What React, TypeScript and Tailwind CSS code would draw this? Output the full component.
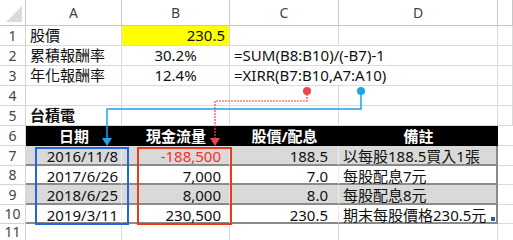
import React from "react";

const cols = ["A", "B", "C", "D", ""];

type Cell = {
  text?: string;
  align?: "left" | "right" | "center";
  cls?: string;
};

const rows: Cell[][] = [
  [{ text: "股價" }, { text: "230.5", align: "right", cls: "bg-[#ffff00] pr-1" }, {}, {}, {}],
  [{ text: "累積報酬率" }, { text: "30.2%", align: "center" }, { text: "=SUM(B8:B10)/(-B7)-1", cls: "overflow-visible z-10" }, {}, {}],
  [{ text: "年化報酬率" }, { text: "12.4%", align: "center" }, { text: "=XIRR(B7:B10,A7:A10)", cls: "overflow-visible z-10" }, {}, {}],
  [{}, {}, {}, {}, {}],
  [{ text: "台積電", cls: "font-bold" }, {}, {}, {}, {}],
];

const table = [
  ["2016/11/8", "-188,500", "188.5", "以每股188.5買入1張"],
  ["2017/6/26", "7,000", "7.0", "每股配息7元"],
  ["2018/6/25", "8,000", "8.0", "每股配息8元"],
  ["2019/3/11", "230,500", "230.5", "期末每股價格230.5元"],
];

const alignCls = (a?: string) =>
  a === "right" ? "justify-end" : a === "center" ? "justify-center" : "justify-start";

export default function App() {
  return (
    <div
      className="relative w-[513px] h-[240px] overflow-hidden bg-white text-[15px] text-[#111]"
      style={{ fontFamily: '"Noto Sans", "Noto Sans CJK TC", sans-serif' }}
    >
      <div className="grid grid-cols-[26px_96px_108px_109px_159px_1fr] grid-rows-[26px_repeat(6,20px)_repeat(5,19.5px)]">
        {/* corner */}
        <div className="relative border-r border-b border-[#c6c6c6] bg-white">
          <div className="absolute right-[3px] bottom-[3px] w-0 h-0 border-l-[16px] border-l-transparent border-b-[16px] border-b-[#dcdcdc]" />
        </div>
        {cols.map((c, i) => (
          <div
            key={i}
            className="flex items-center justify-center border-r border-b border-[#c6c6c6] bg-white text-[14px] text-[#444]"
          >
            {c}
          </div>
        ))}

        {rows.map((r, ri) => (
          <React.Fragment key={ri}>
            <div className="flex items-center justify-center border-r border-b border-[#d4d4d4] text-[14px] text-[#444]">
              {ri + 1}
            </div>
            {r.map((cell, ci) => (
              <div
                key={ci}
                className={`relative flex items-center whitespace-nowrap border-r border-b border-[#dadada] px-[4px] leading-none ${alignCls(cell.align)} ${cell.cls ?? ""} ${cell.text && ci === 2 ? "border-r-0" : ""}`}
              >
                {cell.text}
              </div>
            ))}
          </React.Fragment>
        ))}

        {/* row 6 header */}
        <div className="flex items-center justify-center border-r border-b border-[#d4d4d4] text-[14px] text-[#444]">6</div>
        {["日期", "現金流量", "股價/配息", "備註"].map((h) => (
          <div key={h} className="flex items-center justify-center bg-black font-bold text-white leading-none">
            {h}
          </div>
        ))}
        <div className="border-b border-[#dadada]" />

        {table.map((r, ri) => {
          const bg = ri % 2 === 0 ? "bg-[#d9d9d9]" : "bg-white";
          return (
            <React.Fragment key={ri}>
              <div className="flex items-center justify-center border-r border-b border-[#d4d4d4] text-[14px] text-[#444]">
                {ri + 7}
              </div>
              <div className={`flex items-center justify-end pt-[4px] pr-[3px] leading-none border-b-2 border-[#8a8a8a] border-r border-r-[#ececec] ${bg}`}>{r[0]}</div>
              <div className={`flex items-center justify-end pt-[4px] pr-[8px] leading-none border-b-2 border-[#8a8a8a] border-r border-r-[#ececec] ${bg} ${ri === 0 ? "text-[#ff2b2b]" : ""}`}>{r[1]}</div>
              <div className={`flex items-center justify-end pt-[4px] pr-[10px] leading-none border-b-2 border-[#8a8a8a] border-r border-r-[#ececec] ${bg}`}>{r[2]}</div>
              <div className={`relative flex items-center justify-start pt-[4px] pl-[4px] whitespace-nowrap leading-none border-b-2 border-[#8a8a8a] border-r-2 border-r-[#8a8a8a] ${bg}`}>
                {r[3]}
                {ri === 3 && <div className="absolute right-[1px] bottom-[1px] w-[4px] h-[4px] bg-[#2a5caa]" />}
              </div>
              <div className="border-b border-[#dadada]" />
            </React.Fragment>
          );
        })}

        <div className="flex items-start justify-center pt-[1px] border-r border-[#d4d4d4] text-[14px] leading-none text-[#444]">11</div>
        <div className="border-r border-[#dadada]" />
        <div className="border-r border-[#dadada]" />
        <div className="border-r border-[#dadada]" />
        <div className="border-r border-[#dadada]" />
        <div />
      </div>

      {/* selection boxes */}
      <div className="absolute left-[35px] top-[147px] w-[94px] h-[78px] border-2 border-[#2166e0]" />
      <div className="absolute left-[137px] top-[147px] w-[95px] h-[78px] border-2 border-[#ec3a1c]" />

      {/* arrows */}
      <svg className="absolute left-0 top-0" width="513" height="240">
        <polyline points="361,91 361,109 107,109 107,140" fill="none" stroke="#1ba5ea" strokeWidth="1.5" />
        <polygon points="102,138 112,138 107,146" fill="#1ba5ea" />
        <circle cx="361" cy="91" r="4" fill="#1ba5ea" />
        <polyline points="307,91 307,101 215,101 215,140" fill="none" stroke="#f0454b" strokeWidth="1.2" strokeDasharray="2 1" />
        <polygon points="210,138 220,138 215,146" fill="#f0454b" />
        <circle cx="307" cy="91" r="4" fill="#f0454b" />
      </svg>
    </div>
  );
}
